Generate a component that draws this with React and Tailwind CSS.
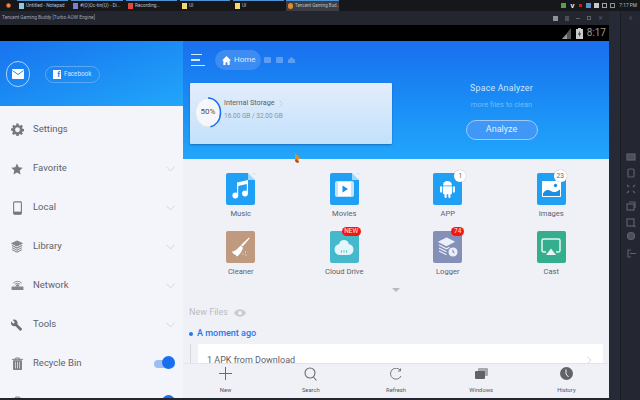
import React from "react";

const Chevron = () => (
  <svg width="9" height="6" viewBox="0 0 9 6" fill="none" stroke="#d5d7de" strokeWidth="1"><path d="M.5.7 4.500 5 8.500.7" /></svg>
);

const Row = ({ icon, label, chev = true, toggle = false }) => (
  <div className="h-[39px] shrink-0 flex items-center pl-[6px] pr-[8px]">
    <div className="w-[22px] flex justify-center">{icon}</div>
    <span className="ml-[5px] text-[9.500px] text-[#5f6168] flex-1 whitespace-nowrap">{label}</span>
    {chev && <Chevron />}
    {toggle && (
      <div className="relative w-[21px] h-[8px] rounded-full bg-[#9dbdf5]">
        <div className="absolute right-0 -top-[3.500px] w-[13px] h-[13px] rounded-full bg-[#1a6fee]" />
      </div>
    )}
  </div>
);

const Gear = () => (
  <svg width="13" height="13" viewBox="0 0 24 24" fill="#77787e"><path fillRule="evenodd" d="M10 1h4l.6 3.100 2 .8L19.300 3.200 22 6l-1.700 2.600.8 2 2.900.6v3.800l-2.900.6-.8 2L22 19.200 19.300 22l-2.700-1.800-2 .8L14 24h-4l-.6-3-2-.8L4.700 22 2 19.200l1.700-2.600-.8-2L0 14v-3.800l2.900-.6.8-2L2 6l2.700-2.800 2.700 1.700 2-.8zM12 8a4.500 4.500 0 1 0 0 9 4.500 4.500 0 0 0 0-9z" /></svg>
);
const Star = () => (
  <svg width="12" height="12" viewBox="0 0 24 24" fill="#77787e"><path d="M12 1l3.400 7.500 8 .9-6 5.500 1.700 8.100L12 19l-7.100 4 1.700-8.100-6-5.500 8-.9z" /></svg>
);
const Phone = () => (
  <svg width="9" height="14" viewBox="0 0 10 15" fill="none"><rect x=".7" y=".7" width="8.600" height="13.600" rx="1" stroke="#77787e" strokeWidth="1.200" /><rect x="1" y="11.500" width="8" height="3" fill="#77787e" /></svg>
);
const Stack = () => (
  <svg width="12" height="13" viewBox="0 0 13 14" fill="none" stroke="#85868c" strokeWidth="1.100"><path fill="#85868c" d="M6.500 1 12 3.700 6.500 6.400 1 3.700z" /><path d="M1 6l5.500 2.700L12 6M1 8.200l5.500 2.700L12 8.200M1 10.400l5.500 2.700 5.500-2.700" /></svg>
);
const Net = () => (
  <svg width="13" height="11" viewBox="0 0 13 12" fill="none"><path d="M3.500 5a4 4 0 0 1 6 0M1.800 3.500a6.500 6.500 0 0 1 9.400 0" stroke="#85868c" strokeWidth="1" /><path d="M5 5.500a2 2 0 0 1 3 0L8.500 7h-4z" fill="#85868c" /><rect x="0" y="7" width="13" height="4" rx=".5" fill="#85868c" /></svg>
);
const Wrench = () => (
  <svg width="12" height="12" viewBox="0 0 24 24" fill="#6e6f75"><path d="M22 19.500 12.800 10.300c.9-2.400.4-5.100-1.600-7.100C9.100 1.100 6 .7 3.500 1.900l4.400 4.400-3 3L.4 4.900c-1.300 2.500-.7 5.600 1.300 7.700 2 2 4.700 2.500 7.100 1.600l9.200 9.200c.4.400 1 .4 1.400 0l2.500-2.500c.5-.4.500-1 .1-1.400z" /></svg>
);
const Trash = () => (
  <svg width="11" height="13" viewBox="0 0 12 14" fill="none"><path d="M0 2.500h12M4 2.500V1h4v1.500" stroke="#77787e" strokeWidth="1" /><path d="M1.200 3.500h9.600V14H1.200z" fill="#77787e" /><path d="M3.700 5v7.500M6 5v7.500M8.300 5v7.500" stroke="#f4f5fb" strokeWidth=".8" /></svg>
);

const Tile = ({ bg, fold = true, children }) => (
  <div className="relative w-[29px] h-[32px] rounded-[2px] overflow-hidden flex items-center justify-center" style={{ background: bg }}>
    {fold && <div className="absolute top-0 right-0 w-0 h-0 border-t-[7px] border-l-[7px] border-t-[#f0f1f6] border-l-[#9fd6fb]" />}
    {children}
  </div>
);

const Badge = ({ children, red, cls }) => (
  <div className={`absolute flex items-center justify-center rounded-full text-[6.500px] leading-none ${red ? "bg-[#f5160f] text-[#ffe6e3]" : "bg-white text-[#5f6168] shadow-[0_0_1px_#999]"} ${cls}`}>{children}</div>
);

const tiles = [
  { label: "Music", el: <Tile bg="#1fa0f5"><svg width="17" height="20" viewBox="0 0 17 20" fill="white"><path d="M5 3.500 16 1v13h-1.200V5L6.200 7v10H5z" /><circle cx="3.300" cy="16.500" r="2.900" /><circle cx="13" cy="14.500" r="2.900" /></svg></Tile> },
  { label: "Movies", el: <Tile bg="#1fa0f5"><svg width="19" height="16" viewBox="0 0 19 16"><rect width="19" height="16" rx="2" fill="#bfe4fb" /><rect x="3" y="1" width="13" height="14" fill="white" /><path d="M7.500 4.500v7l5.500-3.500z" fill="#1a8fe8" /></svg></Tile> },
  { label: "APP", el: <Tile bg="#1fa0f5" fold={false}><svg width="15" height="18" viewBox="0 0 15 18" fill="white"><path d="M3 5.500a4.500 4.500 0 0 1 9 0z" /><rect x="3" y="6.200" width="9" height="8" rx="1" /><rect x="0" y="6.200" width="2.200" height="6.500" rx="1.100" /><rect x="12.800" y="6.200" width="2.200" height="6.500" rx="1.100" /><rect x="4.500" y="13" width="2.200" height="5" rx="1.100" /><rect x="8.300" y="13" width="2.200" height="5" rx="1.100" /></svg></Tile>, badge: <Badge cls="-top-[3px] -right-[4px] w-[12px] h-[12px]">1</Badge> },
  { label: "Images", el: <Tile bg="#1fa0f5" fold={false}><svg width="19" height="16" viewBox="0 0 19 16"><rect width="19" height="16" rx="1" fill="white" /><path d="M1 12.500c3-5 6-3.500 9-2s5 0 8-2V15H1z" fill="#1a8fe8" /><circle cx="13.500" cy="4.500" r="1.700" fill="#1a8fe8" /></svg></Tile>, badge: <Badge cls="-top-[3px] -right-[1px] w-[13px] h-[12px]">23</Badge> },
  { label: "Cleaner", el: <Tile bg="#bf9a7e" fold={false}><svg width="19" height="21" viewBox="0 0 19 21" fill="white"><path d="M18 .5l.7.7-7 8.300-1.700-1.500z" /><path d="M9.500 8.500l2.500 2.200c-1 4-4 7.500-6 8.800-.8-.6-1-1-1.200-1.700-.7.200-1.300 0-2-.7C1.800 16.300 1.200 15.500 1 14.500c3 0 6.500-3.500 8.500-6z" /><circle cx="12" cy="17" r=".6" /><circle cx="14.500" cy="15" r=".6" /><circle cx="15" cy="18" r=".6" /></svg></Tile> },
  { label: "Cloud Drive", el: <Tile bg="#45b9cc" fold={false}><svg width="20" height="17" viewBox="0 0 20 17"><path d="M10 1a5 5 0 0 1 4.800 4C17.500 5.500 19.500 7.500 19.500 10.500a5.500 5.500 0 0 1-5.500 5.500H6a5.500 5.500 0 0 1-5.500-5.500C.5 7.500 2.500 5.500 5.200 5A5 5 0 0 1 10 1z" fill="#e4f6fa" /><path d="M7.500 11.500v2M10 11.500v2M12.500 11.500v2" stroke="#45b9cc" /></svg></Tile>, badge: <Badge red cls="-top-[4px] -right-[2px] w-[19px] h-[9px]">NEW</Badge> },
  { label: "Logger", el: <Tile bg="#8490b8" fold={false}><svg width="20" height="20" viewBox="0 0 20 20" fill="none" stroke="#eef0f8" strokeWidth="1.100"><path fill="#eef0f8" d="M8.500 1 16 4.800 8.500 8.600 1 4.800z" /><path d="M1 8l7.500 3.800 3-1.500M1 11l7.500 3.800M1 14l7.500 3.800" /><circle cx="15" cy="15" r="4" fill="#eef0f8" /><path d="M15 12.800V15l1.500 1" stroke="#8490b8" /></svg></Tile>, badge: <Badge red cls="-top-[4px] -right-[2px] w-[13px] h-[9px]">74</Badge> },
  { label: "Cast", el: <Tile bg="#35ad8f" fold={false}><svg width="20" height="18" viewBox="0 0 20 18"><path d="M5 14H2.500A1.500 1.500 0 0 1 1 12.500v-10A1.500 1.500 0 0 1 2.500 1h15A1.500 1.500 0 0 1 19 2.500v10a1.500 1.500 0 0 1-1.500 1.500H15" fill="none" stroke="#e6f6f1" strokeWidth="1.500" /><path d="M10 10.500 15 17H5z" fill="#e6f6f1" /></svg></Tile> },
];

const Nav = ({ icon, label }) => (
  <div className="flex-1 flex flex-col items-center">
    <div className="h-[17px] flex items-center justify-center">{icon}</div>
    <span className="text-[5.800px] text-[#55565c] mt-[4px] leading-[9px]">{label}</span>
  </div>
);

const tabs = [
  { w: "w-[51px]", text: "Untitled - Notepad", c: "bg-[#8ec6ea]" },
  { w: "w-[52px]", text: "#(Ọ)Ọc-tin(Ọ) - Di...", c: "bg-[#7c7fd6]" },
  { w: "w-[51px]", text: "Recording...", c: "bg-[#dd4a3c]" },
  { w: "w-[50px]", text: "UI", c: "bg-[#f5d76e]" },
  { w: "w-[51px]", text: "UI", c: "bg-[#f5d76e]" },
];

const Rail = () => (
  <svg width="10" height="106" viewBox="0 0 10 106" fill="none" stroke="#5d616d" strokeWidth="1.200">
    <rect x="1" y="1" width="8" height="6" fill="#4b4f5b" />
    <rect x="2" y="16" width="6" height="8" rx="1" />
    <path d="M1 32l2 2M9 32l-2 2M1 40l2-2M9 40l-2-2" />
    <rect x="1" y="51" width="7" height="6" /><path d="M3 49h6v6" />
    <rect x="1" y="66" width="7" height="7" /><path d="M8 73l1.500 1" />
    <circle cx="5" cy="83" r="3.500" fill="#4b4f5b" />
    <path d="M5 97H2v7h3M4 100.500h6" />
  </svg>
);

export default function App() {
  return (
    <div className="relative w-[640px] h-[400px] overflow-hidden flex flex-col bg-[#23252f] font-['Roboto',sans-serif]">
      {/* Windows taskbar */}
      <div className="h-[11px] shrink-0 bg-[#16171b] flex items-stretch text-[4.800px] text-[#bcbfc6] leading-[10px]">
        <div className="w-[17px] flex items-center justify-center">
          <div className="w-[5px] h-[5px] rounded-full bg-[#d9a12f] border border-[#c9473b]" />
        </div>
        {tabs.map((t, i) => (
          <div key={i} className={`${t.w} mr-[3px] border-t border-[#4c93d6] flex items-center gap-[1px] overflow-hidden whitespace-nowrap`}>
            <div className={`w-[5px] h-[6px] ml-[2px] shrink-0 ${t.c}`} />
            <span className="ml-[1px]">{t.text}</span>
          </div>
        ))}
        <div className="w-[53px] -ml-[1px] bg-[#3b3d44] border-t border-[#4c93d6] flex items-center whitespace-nowrap overflow-hidden">
          <div className="w-[5px] h-[6px] ml-[2px] mr-[2px] shrink-0 rounded-full bg-[#e28a2c]" />
          <span className="text-[4.500px]">Tencent Gaming Bud...</span>
        </div>
        <div className="flex-1 flex items-center justify-end gap-[3px] pr-[3px]">
          <div className="w-[5px] h-[5px] bg-[#5d9e4b]" />
          <span className="text-[6px] font-bold text-white mx-[1px]">V</span>
          <div className="w-[3px] h-[3px] bg-[#cc1f1f] mx-[1px]" />
          <div className="w-[5px] h-[5px] bg-[#5b8fd0]" />
          <div className="w-[5px] h-[5px] bg-[#c5c8d0]" />
          <div className="w-[5px] h-[5px] border border-[#a0a3aa]" />
          <div className="w-[5px] h-[5px] border border-[#8b8e95]" />
          <span className="ml-[1px]">7:17 PM</span>
        </div>
      </div>

      <div className="flex-1 flex min-h-0">
        {/* Emulator column */}
        <div className="w-[609px] flex flex-col min-h-0">
          <div className="h-[14px] shrink-0 bg-[#23252f] flex items-center text-[4.800px] text-[#a0a3ad] pl-[2px] pr-[6px]">
            <span className="flex-1">Tencent Gaming Buddy  [Turbo AOW Engine]</span>
            <div className="flex items-center gap-[7px]">
              <div className="w-[5px] h-[5px] bg-[#8f929c]" />
              <div className="w-[4px] h-[5px] bg-[#4b4e59]" />
              <div className="w-[4px] h-[1px] bg-[#5d606b]" />
              <div className="w-[4px] h-[4px] border border-[#5d606b]" />
              <span className="text-[6px] text-[#5d606b] leading-none">✕</span>
            </div>
          </div>
          {/* Android status bar */}
          <div className="h-[16px] shrink-0 bg-black flex items-center justify-end text-[#9a9a9a] pr-[3px]">
            <svg width="10" height="11" viewBox="0 0 10 11" className="mr-[4px]"><path d="M9 0v11H0z" fill="#555" /><path d="M5 6v5H0z" fill="#9a9a9a" /></svg>
            <svg width="7" height="11" viewBox="0 0 7 11" className="mr-[4px]"><rect y="1" width="7" height="10" fill="#ccc" /><rect x="2" width="3" height="1" fill="#ccc" /><path d="M4 3 2 6.500h1.500L3 9l2-3.500H3.500z" fill="#222" /></svg>
            <span className="text-[10px] leading-none">8:17</span>
          </div>
          {/* App */}
          <div className="flex-1 min-h-0 flex">
            {/* Drawer */}
            <div className="w-[183px] shrink-0 flex flex-col overflow-hidden bg-[#f4f5fb]">
              <div className="h-[65px] shrink-0 bg-gradient-to-br from-[#1a72ee] to-[#23a6fa] flex items-start pt-[20px] pl-[6px]">
                <div className="w-[24px] h-[26px] rounded-full border border-[#a9d3fb] flex items-center justify-center">
                  <svg width="12" height="10" viewBox="0 0 12 10"><rect width="12" height="10" rx="1" fill="white" /><path d="M.5 1.500 6 5.500l5.500-4" fill="none" stroke="#2184f0" strokeWidth="1" /></svg>
                </div>
                <div className="ml-[15px] mt-[5px] w-[55px] h-[17px] rounded-full border border-[#5aa9f6] flex items-center pl-[7px] text-[#d5e9fd] text-[6.300px]">
                  <div className="w-[8px] h-[9px] bg-white text-[#2184f0] text-[8px] font-bold leading-[10px] text-right pr-[1px] mr-[3px]">f</div>
                  Facebook
                </div>
              </div>
              <div className="h-[4px] shrink-0" />
              <Row icon={<Gear />} label="Settings" chev={false} />
              <Row icon={<Star />} label="Favorite" />
              <Row icon={<Phone />} label="Local" />
              <Row icon={<Stack />} label="Library" />
              <Row icon={<Net />} label="Network" />
              <Row icon={<Wrench />} label="Tools" />
              <Row icon={<Trash />} label="Recycle Bin" chev={false} toggle />
              <Row icon={<Trash />} label="Show hidden folders" chev={false} toggle />
            </div>

            {/* Main */}
            <div className="flex-1 min-w-0 flex flex-col bg-[#f0f1f6]">
              <div className="h-[118px] shrink-0 bg-gradient-to-b from-[#1a6fee] to-[#22a6fb] pt-[9px]">
                <div className="flex items-center pl-[8px] h-[20px]">
                  <div className="w-[15px] flex flex-col gap-[4px]">
                    <div className="w-[11px] h-[1.500px] bg-[#d5e8fd]" />
                    <div className="w-[9px] h-[1.500px] bg-[#d5e8fd]" />
                    <div className="w-[14px] h-[1.500px] bg-[#d5e8fd]" />
                  </div>
                  <div className="ml-[9px] w-[46px] h-[20px] rounded-full bg-[#3c8cf2] flex items-center pl-[7px] text-[8px] text-[#dcecfe]">
                    <svg width="9" height="9" viewBox="0 0 10 10" fill="white" className="mr-[3px]"><path d="M5 0 10 5H8.500v5H6V7H4v3H1.500V5H0z" /></svg>
                    Home
                  </div>
                  <div className="ml-[3px] w-[7px] h-[6px] rounded-[1px] bg-[#5d9df4]" />
                  <div className="ml-[5px] w-[7px] h-[6px] rounded-[1px] bg-[#5d9df4]" />
                  <svg width="7" height="6" viewBox="0 0 7 6" className="ml-[5px]"><path d="M3.500 0 7 3v3H0V3z" fill="#5d9df4" /></svg>
                </div>
                <div className="flex items-start pl-[7px] mt-[13px]">
                  <div className="relative w-[202px] h-[61px] rounded-[1px] bg-gradient-to-b from-[#e3edfc] to-[#c2e1fb] shadow-[0_1px_2px_rgba(20,60,130,0.5)] flex items-start pt-[14px] pl-[5px]">
                    <div className="relative w-[26px] h-[30px]">
                      <svg width="27" height="31" viewBox="0 0 27 31" className="absolute inset-0"><ellipse cx="13" cy="15.500" rx="12.500" ry="14.500" fill="#f5f7fb" stroke="#dde2ea" strokeWidth="1" /><path d="M13 1C20 1 25.500 7.500 25.500 15.500S21 28.500 15.500 29.700" fill="none" stroke="#1a6fee" strokeWidth="1.500" /></svg>
                      <span className="absolute inset-0 flex items-center justify-center text-[8px] text-[#4d4f56]">50%</span>
                    </div>
                    <div className="ml-[3px]">
                      <div className="flex items-center text-[7.200px] text-[#5b6068] h-[12px]">
                        Internal Storage
                        <svg width="4" height="7" viewBox="0 0 4 7" fill="none" stroke="#c0c8d4" strokeWidth=".8" className="ml-[4px]"><path d="M.5.500 3.500 3.500.5 6.500" /></svg>
                      </div>
                      <div className="text-[6.500px] text-[#8d939d] mt-[3px] whitespace-nowrap">16.00 GB / 32.00 GB</div>
                    </div>
                  </div>
                  <div className="flex-1 flex flex-col items-center pl-[2px]">
                    <div className="text-[8.800px] text-[#cfe4fc] tracking-[0.2px] leading-[11px]">Space Analyzer</div>
                    <div className="text-[7.500px] text-[#7db6f8] mt-[6px] leading-[10px]">more files to clean</div>
                    <div className="mt-[10px] w-[72px] h-[20px] rounded-full border border-[#9dcafa] bg-[#3f97f6] flex items-center justify-center text-[9px] text-[#e3f0fe]">Analyze</div>
                  </div>
                </div>
              </div>

              {/* Grid */}
              <div className="grid grid-cols-4 pl-[6px] pr-[6px] pt-[14px] gap-y-[9px] shrink-0">
                {tiles.map((t) => (
                  <div key={t.label} className="flex flex-col items-center h-[49px]">
                    <div className="relative">{t.el}{t.badge}</div>
                    <span className="text-[7.600px] text-[#5f6168] mt-[3px] leading-[11px]">{t.label}</span>
                  </div>
                ))}
              </div>
              <div className="flex justify-center mt-[8px] shrink-0">
                <div className="w-0 h-0 border-x-[4px] border-x-transparent border-t-[4px] border-t-[#b8bac2]" />
              </div>
              <div className="flex items-center pl-[6px] mt-[15px] h-[12px] shrink-0 text-[9px] text-[#b9bbc3]">
                New Files
                <svg width="12" height="8" viewBox="0 0 12 8" className="ml-[6px]"><path d="M0 4c3-5 9-5 12 0-3 5-9 5-12 0z" fill="#c9cbd2" /><circle cx="6" cy="4" r="2" fill="#f0f1f6" /></svg>
              </div>
              <div className="flex items-center pl-[6px] mt-[9px] h-[12px] shrink-0 text-[9px] font-medium text-[#1f77ef]">
                <div className="w-[4px] h-[4px] rounded-full bg-[#1f77ef] mr-[4px]" />
                A moment ago
              </div>
              <div className="flex-1 min-h-0 pl-[7px] pr-[6px] mt-[4px] flex overflow-hidden">
                <div className="w-[1px] bg-[#d5d7de] mr-[7px]" />
                <div className="flex-1 bg-white rounded-[1px] h-[40px] flex items-start pl-[9px] pr-[11px] pt-[10px] text-[9px] text-[#5f6168]">
                  <span className="flex-1 leading-[12px]">1 APK from Download</span>
                  <svg width="5" height="8" viewBox="0 0 5 8" fill="none" stroke="#d5d7de" className="mt-[2px]"><path d="M.5.500 4 4 .5 7.500" /></svg>
                </div>
              </div>
              <div className="h-[35px] shrink-0 bg-[#f0f1f6] border-t border-[#e4e5ea] flex pt-[1px]">
                <Nav label="New" icon={<svg width="13" height="13" viewBox="0 0 13 13" stroke="#6a6b72" fill="none"><path d="M6.500 0v13M0 6.500h13" /></svg>} />
                <Nav label="Search" icon={<svg width="13" height="14" viewBox="0 0 13 14" stroke="#6a6b72" fill="none" strokeWidth="1.100"><circle cx="6" cy="6" r="5" /><path d="M9.500 10l3 3.500" /></svg>} />
                <Nav label="Refresh" icon={<svg width="12" height="12" viewBox="0 0 12 12" stroke="#77787e" fill="none"><path d="M10.500 2.500A5.500 5.500 0 1 0 11 8M10.500 .5v2.500H8" /></svg>} />
                <Nav label="Windows" icon={<svg width="13" height="12" viewBox="0 0 13 12"><rect x="3" y="0" width="10" height="8" rx="1" fill="#a9aab0" /><rect x="0" y="3" width="10" height="8" rx="1" fill="#626369" /></svg>} />
                <Nav label="History" icon={<svg width="13" height="13" viewBox="0 0 13 13"><circle cx="6.500" cy="6.500" r="6.500" fill="#626369" /><path d="M6 2.500V7l2.500 3" stroke="#f0f1f6" fill="none" strokeWidth="1" /></svg>} />
              </div>
            </div>
          </div>
          <div className="h-[2px] shrink-0 bg-[#23252f]" />
        </div>

        {/* Right rail */}
        <div className="flex-1 flex">
          <div className="w-[12px] bg-[#262936] border-r border-[#1b1d25]" />
          <div className="flex-1 flex flex-col items-center bg-[#242631] pt-[3px]">
            <span className="text-[#4b4f5b] text-[9px] leading-[9px]">«</span>
            <div className="mt-[130px]"><Rail /></div>
          </div>
        </div>
      </div>

      {/* Mouse pointer */}
      <svg width="6" height="10" viewBox="0 0 6 10" className="absolute left-[295px] top-[153px]"><path d="M0 0 6 6H3.500L4 10 2 9 0 8z" fill="#e0901f" /><path d="M1 6 4 9 2 10 0 8z" fill="#b5432b" /></svg>
    </div>
  );
}
